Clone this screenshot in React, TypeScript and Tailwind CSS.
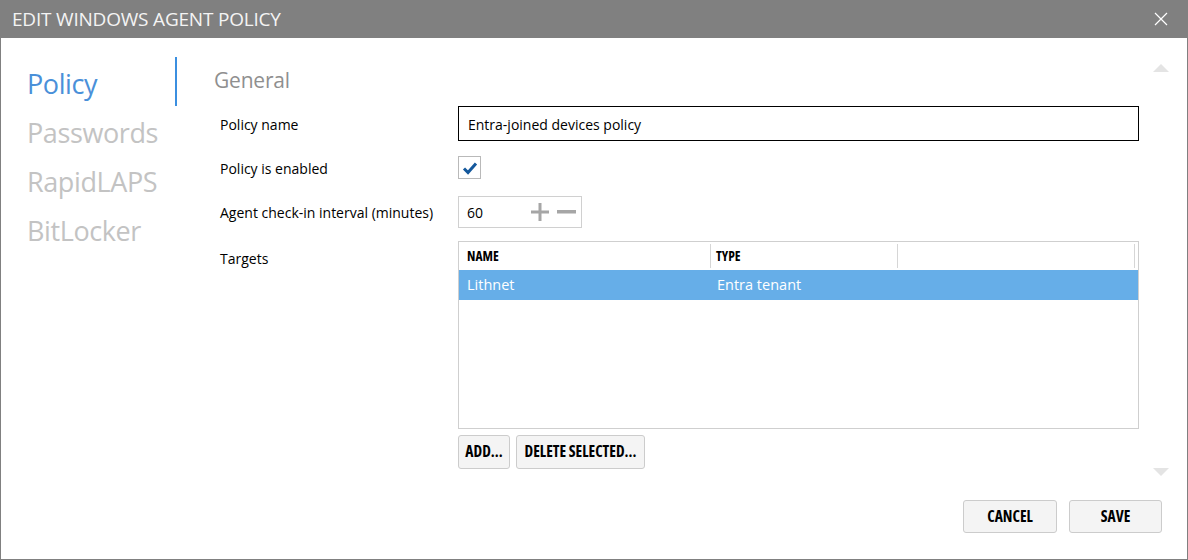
import React from 'react';

const navItems = ['Policy', 'Passwords', 'RapidLAPS', 'BitLocker'];

const font = { fontFamily: '"Open Sans", "Noto Sans", sans-serif' };

function Checkbox() {
  return (
    <div className="w-[23px] h-[23px] border border-[#b9b9b9] bg-white flex items-center justify-center">
      <svg width="16" height="14" viewBox="0 0 16 14">
        <path d="M2 7.5 L6 11.5 L14 2.5" fill="none" stroke="#14589c" strokeWidth="3" strokeLinejoin="miter" />
      </svg>
    </div>
  );
}

function Spinner() {
  return (
    <div className="w-[124px] h-[32px] border border-[#d0d0d0] flex items-center pl-[8px] text-[14px] text-black">
      <span className="flex-1">60</span>
      <svg width="18" height="18" viewBox="0 0 18 18" className="mr-[8px]">
        <rect x="0" y="7.5" width="18" height="3" fill="#a6a6a6" />
        <rect x="7.5" y="0" width="3" height="18" fill="#a6a6a6" />
      </svg>
      <svg width="19" height="4" viewBox="0 0 19 4" className="mr-[5px]">
        <rect x="0" y="0" width="19" height="3.5" fill="#a6a6a6" />
      </svg>
    </div>
  );
}

function Button({ label, className }: { label: string; className: string }) {
  return (
    <button
      className={`border border-[#cccccc] bg-[#f4f4f4] rounded-[3px] text-[15.5px] font-bold text-black font-stretch-condensed ${className}`}
      style={font}
    >
      {label}
    </button>
  );
}

export default function App() {
  return (
    <div className="w-[1188px] h-[560px] flex flex-col bg-white overflow-hidden" style={font}>
      <div className="h-[38px] bg-[#808080] flex items-center justify-between pl-[12px] pr-[20px] shrink-0">
        <span className="text-[19px] text-[#f4f4f4] tracking-[-0.2px]">EDIT WINDOWS AGENT POLICY</span>
        <svg width="14" height="14" viewBox="0 0 14 14">
          <path d="M1 1 L13 13 M13 1 L1 13" stroke="#ffffff" strokeWidth="1.2" />
        </svg>
      </div>

      <div className="flex-1 flex flex-col border-l border-r border-b border-[#808080]">
        <div className="flex flex-1">
          <nav className="w-[176px] pt-[19px] shrink-0">
            {navItems.map((item, i) => (
              <div
                key={item}
                className={`h-[49px] flex items-center pl-[26px] pt-[5px] text-[27px] tracking-[-0.4px] ${
                  i === 0 ? 'text-[#4a90d9] border-r-2 border-[#3b8fe0]' : 'text-[#c3c3c3]'
                }`}
              >
                {item}
              </div>
            ))}
          </nav>

          <div className="flex-1 pl-[37px] pt-[28px]">
            <div className="text-[21px] leading-[28px] text-[#8f8f8f] tracking-[-0.2px]">General</div>

            <div className="grid grid-cols-[244px_681px] mt-[12px] text-[14px] text-black">
              <div className="pl-[6px] h-[35px] flex items-center pt-[1px]">Policy name</div>
              <div className="h-[35px] border border-black flex items-center pl-[9px] pt-[1px]">Entra-joined devices policy</div>

              <div className="pl-[6px] h-[23px] mt-[15px] flex items-center pt-[1px]">Policy is enabled</div>
              <div className="mt-[15px]">
                <Checkbox />
              </div>

              <div className="pl-[6px] h-[32px] mt-[17px] flex items-center pt-[1px]">Agent check-in interval (minutes)</div>
              <div className="mt-[17px]">
                <Spinner />
              </div>

              <div className="pl-[6px] mt-[13px] pt-[7px]">Targets</div>
              <div className="mt-[13px]">
                <div className="h-[188px] border border-[#cfcfcf] bg-white">
                  <div className="h-[28px] flex items-stretch text-[13.5px] font-bold font-stretch-condensed">
                    <div className="w-[252px] flex items-center pl-[8px] border-r border-[#d6d6d6] my-[2px]">NAME</div>
                    <div className="w-[187px] flex items-center pl-[5px] border-r border-[#d6d6d6] my-[2px]">TYPE</div>
                    <div className="w-[237px] border-r border-[#d6d6d6] my-[2px]" />
                  </div>
                  <div className="h-[30px] bg-[#66aee8] flex items-center text-white text-[14.5px]">
                    <div className="w-[252px] pl-[8px]">Lithnet</div>
                    <div className="pl-[6px]">Entra tenant</div>
                  </div>
                </div>
                <div className="flex gap-[6px] mt-[6px]">
                  <Button label="ADD..." className="w-[52px] h-[34px]" />
                  <Button label="DELETE SELECTED..." className="w-[129px] h-[34px]" />
                </div>
              </div>
            </div>
          </div>

          <div className="w-[48px] shrink-0 flex flex-col justify-between pt-[26px] pb-[14px] pl-[14px]">
            <svg width="16" height="8" viewBox="0 0 16 8">
              <path d="M0 8 L8 0 L16 8 Z" fill="#e4e4e4" />
            </svg>
            <svg width="16" height="8" viewBox="0 0 16 8">
              <path d="M0 0 L8 8 L16 0 Z" fill="#e4e4e4" />
            </svg>
          </div>
        </div>

        <div className="flex justify-end gap-[12px] pr-[25px] pb-[26px] pt-[10px]">
          <Button label="CANCEL" className="w-[94px] h-[33px]" />
          <Button label="SAVE" className="w-[93px] h-[33px]" />
        </div>
      </div>
    </div>
  );
}
